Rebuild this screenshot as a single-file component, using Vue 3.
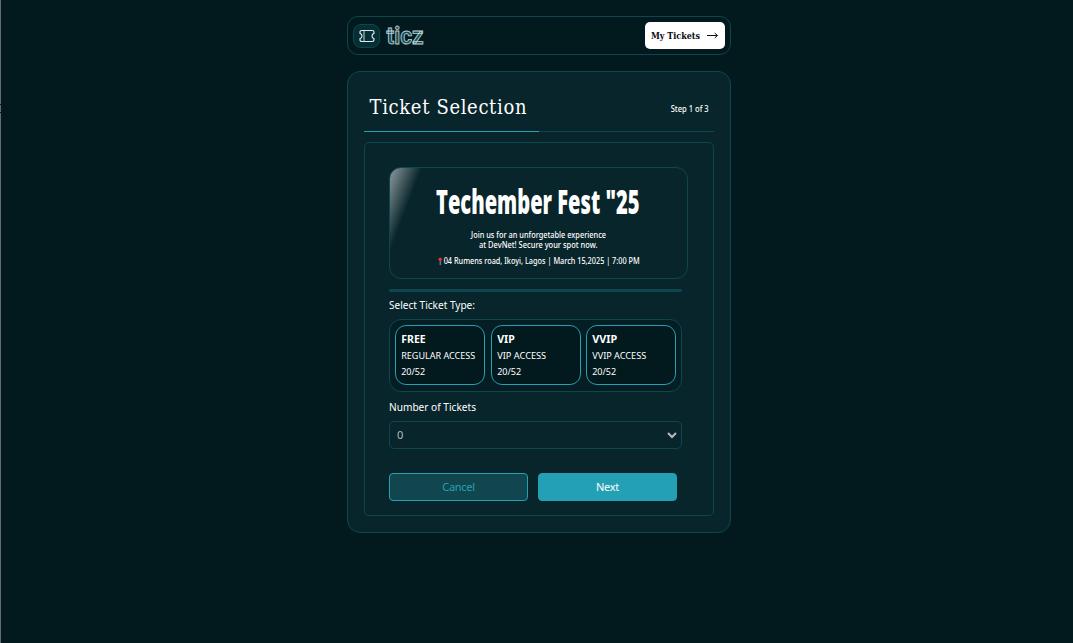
<script setup>
const tickets = [
  { name: 'FREE', access: 'REGULAR ACCESS', left: '20/52', nameW: 24.5, accessW: 74 },
  { name: 'VIP', access: 'VIP ACCESS', left: '20/52', nameW: 17.5, accessW: 49 },
  { name: 'VVIP', access: 'VVIP ACCESS', left: '20/52', nameW: 25, accessW: 54 },
]
</script>

<template>
  <div class="page">
    <i class="edge"></i>
    <header class="nav">
      <div class="brand">
        <span class="badge">
          <svg width="16" height="14" viewBox="0 0 16 14" fill="none" stroke="#dfeaea" stroke-width="1.2" stroke-linejoin="round" stroke-linecap="round">
            <path d="M2.800 1.500H13.200Q15 1.500 15 3.200V4.300Q13 4.800 13 7T15 9.700V10.800Q15 12.500 13.200 12.500H2.800Q1 12.500 1 10.800V9.700Q3 9.200 3 7T1 4.300V3.200Q1 1.500 2.800 1.500Z" />
            <path d="M5 1.800V12.200" stroke-width=".9" />
          </svg>
        </span>
        <svg class="logo" width="42" height="26" viewBox="0 0 42 26">
          <text x="1.500" y="21" textLength="37" lengthAdjust="spacingAndGlyphs">ticz</text>
        </svg>
      </div>
      <button class="mine">
        <svg width="80" height="27" viewBox="0 0 80 27">
          <text x="6" y="17" textLength="49" lengthAdjust="spacingAndGlyphs">My Tickets</text>
          <path d="M62 13.500H72.500M69.700 11L72.500 13.500L69.700 16" fill="none" stroke="#111" stroke-width="1" />
        </svg>
      </button>
    </header>

    <main class="card">
      <div class="head">
        <svg class="title" width="170" height="34" viewBox="0 0 170 34">
          <text x="-0.500" y="25" textLength="157" lengthAdjust="spacing">Ticket Selection</text>
        </svg>
        <svg class="step" width="44" height="14" viewBox="0 0 44 14">
          <text x="1.700" y="11" textLength="38" lengthAdjust="spacingAndGlyphs">Step 1 of 3</text>
        </svg>
      </div>
      <div class="progress"><div class="done"></div></div>

      <section class="panel">
        <div class="event">
          <svg width="297" height="110" viewBox="0 0 297 110">
            <text class="fest" x="46" y="46" textLength="203.500" lengthAdjust="spacingAndGlyphs">Techember Fest "25</text>
            <text class="small" x="81" y="70" textLength="135" lengthAdjust="spacingAndGlyphs">Join us for an unforgetable experience</text>
            <text class="small" x="89" y="80" textLength="118.500" lengthAdjust="spacingAndGlyphs">at DevNet! Secure your spot now.</text>
            <path d="M50.200 92V97" stroke="#a9a9ad" stroke-width=".9" />
            <circle cx="50.200" cy="91.300" r="1.700" fill="#e63325" />
            <text class="small" x="53.700" y="96" textLength="196" lengthAdjust="spacingAndGlyphs">04 Rumens road, Ikoyi, Lagos | March 15,2025 | 7:00 PM</text>
          </svg>
        </div>
        <div class="rule"></div>
        <svg class="label first" width="100" height="18" viewBox="0 0 100 18">
          <text x="0" y="13" textLength="86" lengthAdjust="spacingAndGlyphs">Select Ticket Type:</text>
        </svg>
        <div class="types">
          <div v-for="t in tickets" :key="t.name" class="type">
            <svg width="88" height="58" viewBox="0 0 88 58">
              <text class="name" x="5.200" y="17" :textLength="t.nameW" lengthAdjust="spacingAndGlyphs">{{ t.name }}</text>
              <text x="5.200" y="33" :textLength="t.accessW" lengthAdjust="spacingAndGlyphs">{{ t.access }}</text>
              <text x="5.200" y="49" textLength="24" lengthAdjust="spacingAndGlyphs">{{ t.left }}</text>
            </svg>
          </div>
        </div>
        <svg class="label second" width="100" height="18" viewBox="0 0 100 18">
          <text x="0" y="13" textLength="87" lengthAdjust="spacingAndGlyphs">Number of Tickets</text>
        </svg>
        <div class="select">
          <span>0</span>
          <svg width="10" height="8" viewBox="0 0 10 8"><path d="M1 2L5 6L9 2" fill="none" stroke="#b5bcbc" stroke-width="2" /></svg>
        </div>
        <div class="actions">
          <button class="cancel">Cancel</button>
          <button class="next">Next</button>
        </div>
      </section>
    </main>
  </div>
</template>

<style>
body { margin: 0; background: #02191d; }
</style>

<style scoped>
* { box-sizing: border-box; }
.page {
  position: relative;
  width: 1073px;
  height: 643px;
  padding: 16px 342px 0 347px;
  overflow: hidden;
  background: #02191d;
  color: #fff;
  font-family: "Noto Sans", "Open Sans", sans-serif;
}
svg { display: block; overflow: visible; }
svg text { fill: #fff; }
button { padding: 0; font-family: inherit; }
.edge { position: absolute; left: 0; top: 0; width: 1px; height: 643px; background: linear-gradient(#666b6c 0 104px, #111 104px 105px, #666b6c 105px 112px, #111 112px 113px, #666b6c 113px); }
.nav {
  display: flex;
  justify-content: space-between;
  align-items: center;
  height: 39px;
  padding: 0 5px;
  border: 1px solid #0e464f;
  border-radius: 11px;
}
.brand { display: flex; align-items: center; }
.badge {
  display: flex;
  align-items: center;
  justify-content: center;
  width: 27px;
  height: 24px;
  border: 1px solid #0e464f;
  border-radius: 8px;
  background: #052f35;
}
.logo { margin-left: 5px; }
.logo text { font: 700 24px "Roboto", sans-serif; fill: #12505b; stroke: #bdced1; stroke-width: 0.9px; }
.mine { width: 80px; height: 27px; border: 0; border-radius: 5px; background: #fff; }
.mine text { font: 700 9px "DejaVu Serif Condensed", "DejaVu Serif", serif; fill: #0a0c11; }
.card {
  height: 462px;
  margin-top: 16px;
  padding: 16px;
  border: 1px solid #0e464f;
  border-radius: 13px;
  background: #08252b;
}
.head { display: flex; justify-content: space-between; height: 43px; padding: 0 1px 0 6px; }
.title { margin-top: 1px; }
.title text { font: 400 20px "DejaVu Serif Condensed", "DejaVu Serif", serif; }
.step { margin-top: 13px; }
.step text { font-size: 8px; font-weight: 500; }
.progress { height: 1px; background: #0e464f; }
.done { width: 175px; height: 1px; background: #24a0b5; }
.panel {
  height: 374px;
  margin-top: 10px;
  padding: 24px;
  border: 1px solid #0e464f;
  border-radius: 5px;
}
.event {
  width: 299px;
  height: 112px;
  border: 1px solid #0e464f;
  border-radius: 12px;
  background: linear-gradient(111deg, #89989b, #637579 10px, #08252b 30px);
}
.fest { font: 800 33px "Open Sans", sans-serif; }
.small { font-size: 8px; font-weight: 500; }
.rule { width: 293px; height: 3px; margin-top: 10px; border-radius: 2px; background: #0e464f; }
.label text { font-size: 11px; }
.first { margin-top: 4px; }
.types {
  display: flex;
  justify-content: space-between;
  width: 293px;
  height: 73px;
  margin-top: 5px;
  padding: 5px;
  border: 1px solid #0e464f;
  border-radius: 12px;
  background: #041e23;
}
.type { width: 90px; height: 60px; border: 1px solid #249fb4; border-radius: 11px; background: #02191d; }
.type text { font-size: 9.500px; }
.type .name { font-size: 11px; font-weight: 700; }
.second { margin-top: 6px; }
.select {
  display: flex;
  align-items: center;
  justify-content: space-between;
  width: 293px;
  height: 28px;
  margin-top: 5px;
  padding: 0 4px 0 7px;
  border: 1px solid #0e464f;
  border-radius: 5px;
  color: #b5bcbc;
  font-size: 11px;
}
.select span { padding-bottom: 2px; }
.actions { display: flex; gap: 10px; margin-top: 24px; }
.actions button { width: 139px; height: 28px; padding-bottom: 2px; border: 1px solid #24a0b5; border-radius: 4px; font-size: 11px; letter-spacing: -0.3px; }
.cancel { background: #12464e; color: #24a0b5; }
.next { background: #24a0b5; color: #fff; }
</style>
